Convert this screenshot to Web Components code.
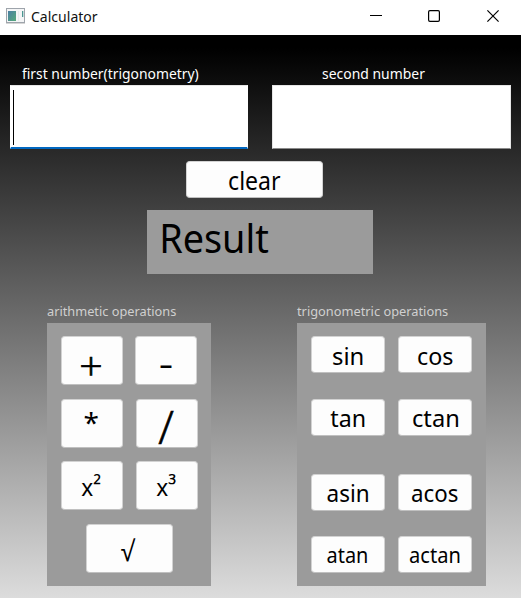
<!DOCTYPE html>
<html lang="en">
<head>
<meta charset="utf-8">
<title>Calculator</title>
<style>
html,body{margin:0;height:100%;overflow:hidden}
body{font-family:"Noto Sans","Open Sans",sans-serif}
</style>
</head>
<body>
<calc-window></calc-window>
<script>
const FONT = '"Noto Sans","Open Sans",sans-serif';
const THIN = '"Open Sans","Noto Sans",sans-serif';
const pen = document.createElement('canvas').getContext('2d');
const define = (name, html, setup) => customElements.define(name, class extends HTMLElement {
  connectedCallback() {
    if (this.shadowRoot) return;
    const t = document.createElement('template');
    t.innerHTML = html;
    this.attachShadow({mode: 'open'}).append(t.content.cloneNode(true));
    if (setup) setup(this, this.shadowRoot);
  }
});

// One line of text condensed to an ink width (w); base is the baseline's distance from the top.
define('fit-text', `<style>
:host{display:block;flex:none}
svg{display:block;overflow:visible}
:host([thin]) text{stroke:currentColor;stroke-width:.7px}
</style><svg><text fill="currentColor"></text></svg>`, (el, root) => {
  const n = (k, d) => el.hasAttribute(k) ? +el.getAttribute(k) : d;
  const s = el.textContent.trim(), size = n('size', 14), w = n('w', 50), base = n('base', 20), raise = n('raise', 0), dx = n('dx', 0);
  const thin = el.hasAttribute('thin'), family = thin ? THIN : FONT, weight = thin ? 300 : 400;
  pen.font = `${weight} ${size}px ${family}`;
  const m = pen.measureText(s);
  const k = w / (m.actualBoundingBoxLeft + m.actualBoundingBoxRight);
  const svg = root.querySelector('svg'), text = root.querySelector('text');
  svg.setAttribute('width', w);
  svg.setAttribute('height', base);
  text.setAttribute('font-size', size);
  text.setAttribute('font-family', family);
  text.setAttribute('font-weight', weight);
  text.setAttribute('transform', `translate(${m.actualBoundingBoxLeft * k + dx} ${base}) scale(${k} 1)`);
  if (raise) {
    const span = document.createElementNS('http://www.w3.org/2000/svg', 'tspan');
    span.setAttribute('dy', -raise);
    span.textContent = s[1];
    text.append(s[0], span);
  } else text.textContent = s;
});

define('title-bar', `<style>
:host{display:flex;height:35px;background:#fff;color:#111;box-sizing:border-box;padding-left:6px}
.icon{margin:8px 6px 0 0;width:19px;height:16px;flex:none}
.ctl{margin:9px 0 0 auto;width:129px;height:14px}
svg{display:block}
</style>
<svg class="icon" viewBox="0 0 19 16"><defs><linearGradient id="g" x1="0" y1="0" x2="1" y2="1"><stop offset="0" stop-color="#4a7fa3"/><stop offset="1" stop-color="#55a97b"/></linearGradient></defs>
<rect x=".5" y=".5" width="18" height="14" fill="#f4f5f6" stroke="#9ea4ab"/><path d="M0 15.5h19" stroke="#d5d5d5"/><rect x="2" y="3" width="8" height="10" fill="url(#g)"/><path d="M12.5 3v10" stroke="#e8eaec"/><rect x="16" y="3" width="1.3" height="6" fill="#4b9691"/></svg>
<fit-text size="15" w="66.5" base="22">Calculator</fit-text>
<svg class="ctl" viewBox="0 0 129 14" fill="none" stroke="#000"><path d="M0 6.5h12"/><rect x="58.6" y="1.6" width="10.8" height="10.8" rx="1.3" stroke-width="1.2"/><path d="M117.4 1.4l11.2 11.2M128.6 1.4l-11.2 11.2" stroke-width="1.2"/></svg>
<span style="width:22px;flex:none"></span>`);

define('number-field', `<style>
:host{display:flex;flex-direction:column;color:#fff}
.box{height:64px;box-sizing:border-box;background:#fff;border:1px solid #e6e6e6;border-bottom-color:#8a8a8a;padding:4px 2px}
:host([active]) .box{border-bottom:2px solid #0067c0;border-left-color:#fff;border-right-color:#fff}
.caret{display:none;width:1px;height:55px;background:#000}
:host([active]) .caret{display:block}
.label{height:27px;padding-left:var(--inset)}
</style><div class="label"><slot></slot></div><div class="box"><div class="caret"></div></div>`);

define('push-button', `<style>
:host{display:flex;justify-content:center;box-sizing:border-box;background:#fdfdfd;border:1px solid #d2d2d2;border-bottom-color:#c0c0c0;border-radius:4px;color:#000}
</style><slot></slot>`);

define('op-group', `<style>
:host{display:block;color:#d0d0d0}
.panel{margin-top:7px;height:263px;box-sizing:border-box;padding:13px 14px;background:#9b9b9b}
</style><slot name="label"></slot><div class="panel"><slot></slot></div>`);

define('calc-window', `<style>
:host{display:block;width:521px;height:598px}
main{height:563px;box-sizing:border-box;padding-top:23px;background:linear-gradient(#000 0,#000 13px,#dcdcdc 100%)}
.fields{display:flex;gap:24px;padding-left:10px}
.clear{width:137px;height:37px;margin:12px 0 0 186px}
.result{width:226px;height:64px;margin:12px 0 0 147px;box-sizing:border-box;padding-left:15px;background:#9b9b9b}
.groups{display:flex;gap:86px;padding:22px 0 0 47px}
.ar{display:grid;grid-template-columns:62px 62px;grid-auto-rows:49px;column-gap:13px;row-gap:13.6px}
.ar .wide{grid-column:1/3;width:87px;margin-left:25px}
.ar .minus{margin:0 1px 0 -1px}
.tr{display:grid;grid-template:37px 37px 37px 37px/74px 74px;column-gap:13px;row-gap:26px}
.tr .third{margin-top:12px;margin-bottom:-12px}
.tr .last{margin-top:11px;margin-bottom:-11px}
</style>
<title-bar></title-bar>
<main>
<div class="fields">
<number-field active style="width:238px;--inset:12px"><fit-text size="14.5" w="176.5" base="21">first number(trigonometry)</fit-text></number-field>
<number-field style="width:239px;--inset:50px"><fit-text size="14.5" w="103" base="21">second number</fit-text></number-field>
</div>
<push-button class="clear"><fit-text size="24.5" w="51.5" base="28">clear</fit-text></push-button>
<div class="result"><fit-text size="40" w="106.5" base="43">Result</fit-text></div>
<div class="groups">
<op-group style="width:164px"><fit-text slot="label" size="13.3" w="129" base="20">arithmetic operations</fit-text>
<div class="ar">
<push-button><fit-text thin size="38" w="19.5" base="43" dx="-.5">+</fit-text></push-button>
<push-button class="minus"><fit-text size="30" w="12" base="38" dx=".3">-</fit-text></push-button>
<push-button><fit-text size="28" w="14" base="32.5" dx="-.5">*</fit-text></push-button>
<push-button><fit-text thin size="46" w="16" base="44" dx="-.7">/</fit-text></push-button>
<push-button><fit-text size="24" w="19.5" base="34" raise="2" dx="-.8">x²</fit-text></push-button>
<push-button><fit-text size="24" w="19.5" base="34" raise="2" dx="-.8">x³</fit-text></push-button>
<push-button class="wide"><fit-text size="28" w="15" base="36" dx="-1.3">√</fit-text></push-button>
</div></op-group>
<op-group style="width:189px"><fit-text slot="label" size="13.3" w="151" base="20">trigonometric operations</fit-text>
<div class="tr">
<push-button><fit-text size="24" w="29.5" base="28">sin</fit-text></push-button>
<push-button><fit-text size="24" w="35" base="28">cos</fit-text></push-button>
<push-button><fit-text size="24" w="34" base="27" dx="-.7">tan</fit-text></push-button>
<push-button><fit-text size="24" w="45" base="27">ctan</fit-text></push-button>
<push-button class="third"><fit-text size="24" w="40.5" base="27" dx="-.5">asin</fit-text></push-button>
<push-button class="third"><fit-text size="24" w="46" base="27">acos</fit-text></push-button>
<push-button class="last"><fit-text size="22" w="39.5" base="26" dx="-.5">atan</fit-text></push-button>
<push-button class="last"><fit-text size="22" w="49.5" base="26">actan</fit-text></push-button>
</div></op-group>
</div>
</main>`);
</script>
</body>
</html>
